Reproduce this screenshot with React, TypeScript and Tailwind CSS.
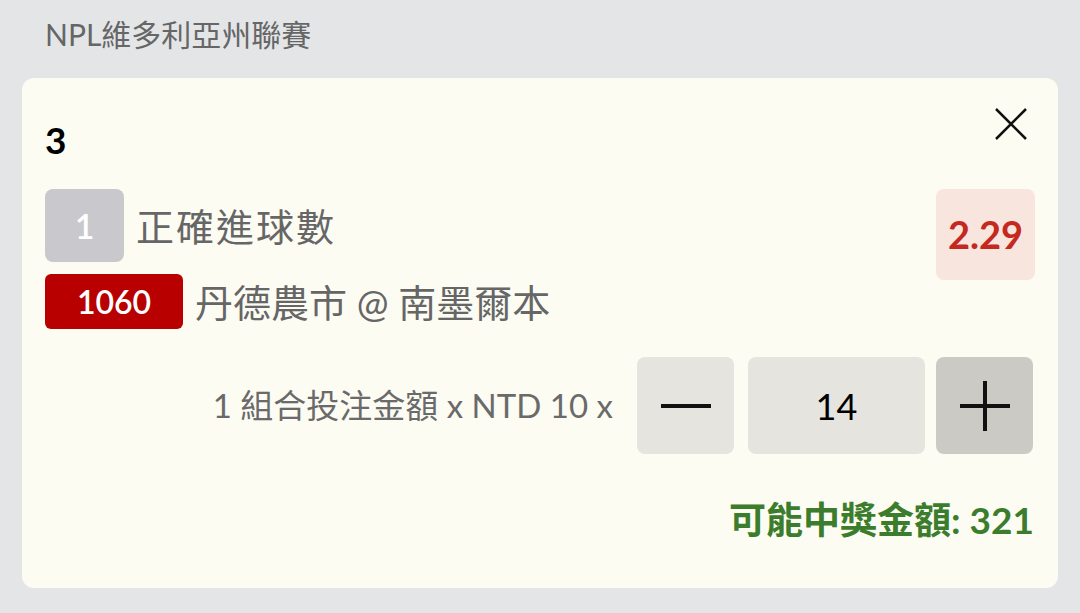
import React from "react";

export default function App() {
  const font = { fontFamily: 'Lato, "Noto Sans CJK TC", sans-serif' };
  return (
    <div className="w-[1080px] h-[613px] bg-[#e4e5e7] overflow-hidden" style={font}>
      <div className="pl-[45px] pt-[14px] h-[78px] text-[30px] leading-[40px] text-[#666666]">NPL維多利亞州聯賽</div>
      <div className="mx-[22px] h-[510px] rounded-[12px] bg-[#fcfcf3] px-[23px] pt-[22px]">
        <div className="flex justify-between items-start">
          <div className="pt-[20px] text-[37px] font-bold leading-[40px] text-black">3</div>
          <svg width="34" height="34" viewBox="0 0 34 34" className="mr-[7px] mt-[7px]">
            <path d="M2 2 L32 32 M32 2 L2 32" stroke="#111" strokeWidth="2.5" fill="none" />
          </svg>
        </div>
        <div className="flex justify-between mt-[29px]">
          <div className="flex flex-col gap-[12px]">
            <div className="flex items-center gap-[12px]">
              <div className="w-[79px] h-[73px] rounded-[8px] bg-[#c8c8cd] flex items-center justify-center text-white text-[34px] font-semibold">1</div>
              <div className="text-[38px] text-[#666666] leading-[44px] tracking-[2px]">正確進球數</div>
            </div>
            <div className="flex items-center gap-[12px]">
              <div className="w-[138px] h-[55px] rounded-[6px] bg-[#b80000] flex items-center justify-center text-white text-[32px] font-semibold">1060</div>
              <div className="text-[38px] text-[#666666] leading-[44px]">丹德農市 @ 南墨爾本</div>
            </div>
          </div>
          <div className="w-[99px] h-[91px] rounded-[8px] bg-[#f7e5de] flex items-center justify-center text-[#c4281e] text-[38px] font-bold">2.29</div>
        </div>
        <div className="flex items-center justify-end mt-[28px] mr-[2px]">
          <div className="text-[33px] text-[#6a6a6a] mr-[24px]">1 組合投注金額 x NTD 10 x</div>
          <div className="w-[97px] h-[97px] rounded-[8px] bg-[#e5e4df] flex items-center justify-center">
            <svg width="50" height="6" viewBox="0 0 50 6"><rect x="0" y="1" width="50" height="4" fill="#111" /></svg>
          </div>
          <div className="ml-[14px] w-[177px] h-[97px] rounded-[8px] bg-[#e5e4df] flex items-center justify-center text-[36px] text-black">14</div>
          <div className="ml-[11px] w-[97px] h-[97px] rounded-[8px] bg-[#cbcac4] flex items-center justify-center">
            <svg width="50" height="50" viewBox="0 0 50 50"><path d="M0 25 H50 M25 0 V50" stroke="#111" strokeWidth="4" /></svg>
          </div>
        </div>
        <div className="flex justify-end mt-[42px] mr-[1px] text-[37px] font-bold text-[#3b7d2c] leading-[48px]">可能中獎金額: 321</div>
      </div>
    </div>
  );
}
